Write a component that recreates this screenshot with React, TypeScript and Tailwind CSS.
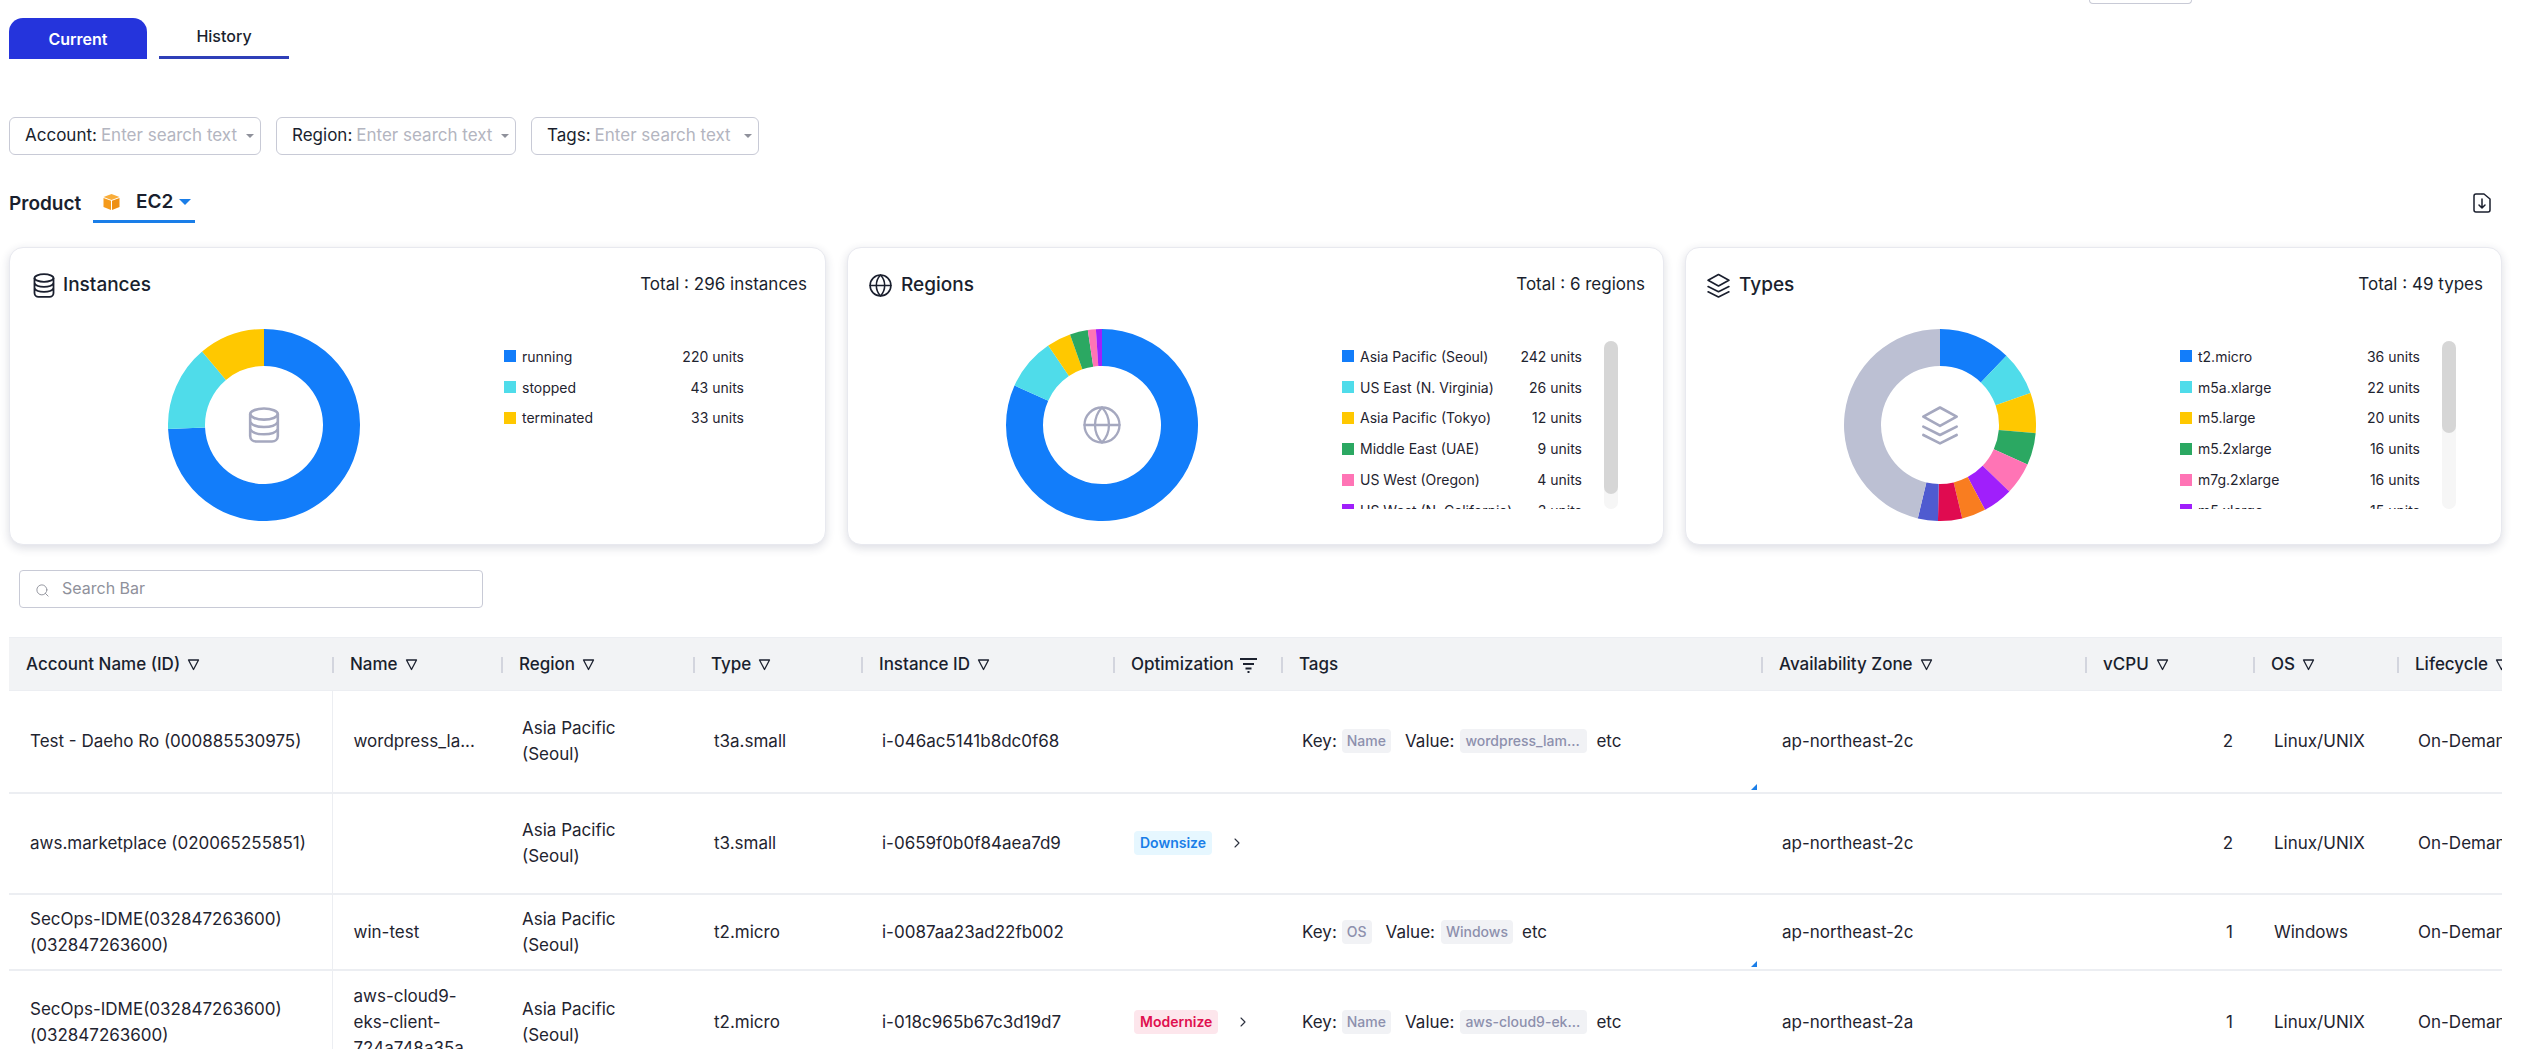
import React from "react";
import { ChevronRight, Globe, Search } from "lucide-react";

type Slice = { label: string; value: number; color: string };

const BLUE = "#127dfa";
const CYAN = "#4fdcea";
const YELLOW = "#ffc800";
const GREEN = "#2ba862";
const PINK = "#ff74b5";
const PURPLE = "#a01ffb";

const instances: Slice[] = [
  { label: "running", value: 220, color: BLUE },
  { label: "stopped", value: 43, color: CYAN },
  { label: "terminated", value: 33, color: YELLOW },
];

const regions: Slice[] = [
  { label: "Asia Pacific (Seoul)", value: 242, color: BLUE },
  { label: "US East (N. Virginia)", value: 26, color: CYAN },
  { label: "Asia Pacific (Tokyo)", value: 12, color: YELLOW },
  { label: "Middle East (UAE)", value: 9, color: GREEN },
  { label: "US West (Oregon)", value: 4, color: PINK },
  { label: "US West (N. California)", value: 3, color: PURPLE },
];

const types: Slice[] = [
  { label: "t2.micro", value: 36, color: BLUE },
  { label: "m5a.xlarge", value: 22, color: CYAN },
  { label: "m5.large", value: 20, color: YELLOW },
  { label: "m5.2xlarge", value: 16, color: GREEN },
  { label: "m7g.2xlarge", value: 16, color: PINK },
  { label: "m5.xlarge", value: 15, color: PURPLE },
];

const typeRest: Slice[] = [
  { label: "c5.large", value: 12, color: "#f97d20" },
  { label: "t3.medium", value: 12, color: "#e00b50" },
  { label: "t3.small", value: 10, color: "#4f5bd0" },
  { label: "etc", value: 137, color: "#bcc0d3" },
];

// donut drawn from the top, clockwise
const Donut = ({ data, children }: { data: Slice[]; children: React.ReactNode }) => {
  const total = data.reduce((sum, d) => sum + d.value, 0);
  const point = (r: number, a: number) =>
    `${96 + r * Math.sin(a)} ${96 - r * Math.cos(a)}`;
  let angle = 0;
  return (
    <div className="relative w-[192px] h-[192px] shrink-0">
      <svg width="192" height="192" viewBox="0 0 192 192">
        {data.map((d) => {
          const start = angle;
          angle += (d.value / total) * Math.PI * 2;
          const big = angle - start > Math.PI ? 1 : 0;
          return (
            <path
              key={d.label}
              fill={d.color}
              d={`M${point(96, start)} A96 96 0 ${big} 1 ${point(96, angle)} L${point(59, angle)} A59 59 0 ${big} 0 ${point(59, start)} Z`}
            />
          );
        })}
      </svg>
      <div className="absolute inset-0 flex items-center justify-center text-[#a5a8bf]">
        {children}
      </div>
    </div>
  );
};

const DbIcon = ({ className }: { className: string }) => (
  <svg className={className} viewBox="0 0 22 25" fill="none" stroke="currentColor" strokeWidth="1.8">
    <ellipse cx="11" cy="5" rx="9.5" ry="3.8" />
    <path d="M1.5 5v15c0 2.4 2 3.8 4 3.8h11c2 0 4-1.4 4-3.8V5" />
    <path d="M1.5 10.5c1.5 2.4 5 3.4 9.5 3.4s8-1 9.5-3.4" />
    <path d="M1.5 15.5c1.5 2.4 5 3.4 9.5 3.4s8-1 9.5-3.4" />
  </svg>
);

const LayersIcon = ({ className }: { className: string }) => (
  <svg className={className} viewBox="0 0 24 24" fill="none" stroke="currentColor" strokeWidth="1.6" strokeLinejoin="round" strokeLinecap="round">
    <path d="M12 1.5 22 7l-10 5.5L2 7z" />
    <path d="M2 13l10 5 10-5" />
    <path d="M2 18l10 5 10-5" />
  </svg>
);

const SortIcon = () => (
  <svg width="13" height="13" viewBox="0 0 13 13" fill="none" stroke="#1d2230" strokeWidth="1.3" strokeLinejoin="round" className="shrink-0">
    <path d="M1.5 2h10L6.5 11.5z" />
  </svg>
);

const Ec2Icon = () => (
  <svg width="17" height="16" viewBox="0 0 17 16">
    <path d="M8.5 0 16.5 3 8.5 6 .5 3z" fill="#f9ad3a" />
    <path d="M.5 4 8 6.8V16L.5 13z" fill="#f59b1c" />
    <path d="M16.5 4 9 6.8V16l7.5-3z" fill="#ee9015" />
  </svg>
);

const Card = ({
  icon,
  title,
  total,
  donut,
  centerIcon,
  legend,
  thumb,
}: {
  icon: React.ReactNode;
  title: string;
  total: string;
  donut: Slice[];
  centerIcon: React.ReactNode;
  legend: Slice[];
  thumb?: string;
}) => (
  <div className="h-[298px] bg-white rounded-[14px] border border-[#e8e9ef] shadow-[0_3px_10px_rgba(40,45,80,0.16)] pt-[24px] pl-[20px] pr-[18px]">
    <div className="flex items-center justify-between h-[26px]">
      <div className="flex items-center gap-[8px] text-[19px] font-medium text-[#1a1f2e]">
        {icon}
        {title}
      </div>
      <div className="text-[17px] text-[#1a1f2e]">{total}</div>
    </div>
    <div className="flex items-start mt-[31px] ml-[138px]">
      <Donut data={donut}>{centerIcon}</Donut>
      <div className="w-[240px] h-[168px] overflow-hidden mt-[12px] ml-[144px]">
        {legend.map((d) => (
          <div key={d.label} className="flex items-center h-[30.8px] text-[14px] text-[#1f2430]">
            <span className="w-[12px] h-[12px] mr-[6px] shrink-0" style={{ background: d.color }} />
            <span className="flex-1 whitespace-nowrap">{d.label}</span>
            <span className="whitespace-nowrap">{d.value} units</span>
          </div>
        ))}
      </div>
      {thumb && (
        <div className="w-[14px] h-[168px] mt-[12px] ml-[22px] rounded-full bg-[#f6f6f6]">
          <div className={`w-[14px] rounded-full bg-[#d6d6d6] ${thumb}`} />
        </div>
      )}
    </div>
  </div>
);

const Head = ({ label, width, first, noSort, filter }: { label: string; width: string; first?: boolean; noSort?: boolean; filter?: boolean }) => (
  <th className={`${width} p-0 font-medium text-left`}>
    <div className={`flex items-center gap-[7px] h-[16px] mt-[1px] whitespace-nowrap ${first ? "pl-[17px]" : "border-l-2 border-[#d3d5de] pl-[16px]"}`}>
      {label}
      {!noSort && !filter && <SortIcon />}
      {filter && (
        <svg width="17" height="16" viewBox="0 0 17 16" fill="none" stroke="#1d2230" strokeWidth="2" className="-ml-[1px]">
          <path d="M0 2h17M3 7h11M5.5 11.500h6M7.500 15h2" />
        </svg>
      )}
    </div>
  </th>
);

const Tag = ({ k, v, wide }: { k: string; v: string; wide?: boolean }) => (
  <div className="flex items-center whitespace-nowrap">
    Key:
    <span className="ml-[5px] h-[24px] px-[5px] flex items-center rounded-[4px] bg-[#f1f2f5] text-[#8d90ad] text-[14px] font-medium">{k}</span>
    <span className="ml-[14px]">Value:</span>
    <span className={`ml-[6px] h-[24px] px-[5px] flex items-center rounded-[4px] bg-[#f1f2f5] text-[#8d90ad] text-[14px] font-medium overflow-hidden ${wide ? "w-[127px]" : ""}`}>{v}</span>
    <span className="ml-[9px]">etc</span>
  </div>
);

const Marker = () => (
  <svg width="6" height="6" viewBox="0 0 6 6" className="absolute right-[4px] bottom-[2px]">
    <path d="M6 0v6H0z" fill="#1a7ee8" />
  </svg>
);

const Badge = ({ label, tone }: { label: string; tone: "blue" | "red" }) => (
  <div className="flex items-center">
    <span
      className={`h-[24px] px-[6px] flex items-center rounded-[4px] text-[14px] font-semibold ${
        tone === "blue" ? "bg-[#e6f7ff] text-[#1a7ee8]" : "bg-[#fde6ec] text-[#e0104f]"
      }`}
    >
      {label}
    </span>
    <ChevronRight className="w-[16px] h-[16px] ml-[17px] text-[#2a2f3d]" strokeWidth={1.6} />
  </div>
);

const rows = [
  {
    h: "h-[102px]",
    account: "Test - Daeho Ro (000885530975)",
    name: "wordpress_la...",
    type: "t3a.small",
    id: "i-046ac5141b8dc0f68",
    opt: null,
    tag: <Tag wide k="Name" v="wordpress_lam..." />,
    mark: true,
    zone: "ap-northeast-2c",
    cpu: 2,
    os: "Linux/UNIX",
  },
  {
    h: "h-[101px]",
    account: "aws.marketplace (020065255851)",
    name: "",
    type: "t3.small",
    id: "i-0659f0b0f84aea7d9",
    opt: <Badge label="Downsize" tone="blue" />,
    tag: null,
    mark: false,
    zone: "ap-northeast-2c",
    cpu: 2,
    os: "Linux/UNIX",
  },
  {
    h: "h-[76px]",
    account: "SecOps-IDME(032847263600) (032847263600)",
    name: "win-test",
    type: "t2.micro",
    id: "i-0087aa23ad22fb002",
    opt: null,
    tag: <Tag k="OS" v="Windows" />,
    mark: true,
    zone: "ap-northeast-2c",
    cpu: 1,
    os: "Windows",
  },
  {
    h: "h-[104px]",
    account: "SecOps-IDME(032847263600) (032847263600)",
    name: "aws-cloud9-eks-client-724a748a35a",
    type: "t2.micro",
    id: "i-018c965b67c3d19d7",
    opt: <Badge label="Modernize" tone="red" />,
    tag: <Tag wide k="Name" v="aws-cloud9-ek..." />,
    mark: false,
    zone: "ap-northeast-2a",
    cpu: 1,
    os: "Linux/UNIX",
  },
];

const Filter = ({ label, width }: { label: string; width: string }) => (
  <div className={`${width} h-[38px] flex items-center pl-[15px] pr-[6px] border border-[#c8cad6] rounded-[6px] text-[17px]`}>
    <span className="text-[#1a1f2e]">{label}</span>
    <span className="ml-[4px] text-[#b3b5c0] whitespace-nowrap">Enter search text</span>
    <span className="ml-auto w-0 h-0 border-x-[4px] border-x-transparent border-t-[4px] border-t-[#8f919b]" />
  </div>
);

export default function App() {
  return (
    <div className="h-screen overflow-hidden bg-white pl-[9px] pr-[26px] font-['Inter',sans-serif] text-[#1a1f2e]">
      {/* Top edge */}
      <div className="h-[18px] flex justify-end">
        <div className="w-[103px] h-[4px] mr-[310px] border border-t-0 border-[#c8cad6] rounded-b-[4px]" />
      </div>

      {/* Tabs */}
      <div className="flex h-[41px] gap-[12px] text-[16px]">
        <div className="w-[138px] flex items-center justify-center rounded-t-[14px] bg-[#2534dc] text-white font-semibold">
          Current
        </div>
        <div className="w-[130px] flex items-center justify-center pb-[2px] border-b-[3px] border-[#2f3fb8] font-medium">
          History
        </div>
      </div>

      {/* Filters */}
      <div className="flex gap-[15px] mt-[58px]">
        <Filter label="Account:" width="w-[252px]" />
        <Filter label="Region:" width="w-[240px]" />
        <Filter label="Tags:" width="w-[228px]" />
      </div>

      {/* Product */}
      <div className="flex items-start justify-between h-[63px] mt-[29px]">
        <div className="flex">
          <div className="w-[84px] h-[38px] pt-[6px] text-[19px] font-semibold">Product</div>
          <div className="w-[102px] h-[39px] flex items-center pl-[10px] border-b-[3px] border-[#1a7ee8]">
            <Ec2Icon />
            <span className="ml-[16px] text-[19px] font-semibold">EC2</span>
            <span className="ml-[6px] w-0 h-0 border-x-[6px] border-x-transparent border-t-[6px] border-t-[#1a7ee8]" />
          </div>
        </div>
        <svg width="18" height="20" viewBox="0 0 18 20" fill="none" stroke="#1a1f2e" strokeWidth="1.5" strokeLinecap="round" strokeLinejoin="round" className="mt-[9px] mr-[11px]">
          <path d="M3 1h8l6 5v11a2 2 0 0 1-2 2H3a2 2 0 0 1-2-2V3a2 2 0 0 1 2-2z" />
          <path d="M9 6v9M6 12l3 3 3-3" />
        </svg>
      </div>

      {/* Summary cards */}
      <div className="grid grid-cols-3 gap-[21px]">
        <Card
          icon={<DbIcon className="w-[22px] h-[25px] ml-[3px]" />}
          title="Instances"
          total="Total : 296 instances"
          donut={instances}
          centerIcon={<DbIcon className="w-[32px] h-[38px]" />}
          legend={instances}
        />
        <Card
          icon={<Globe className="w-[25px] h-[25px]" strokeWidth={1.5} />}
          title="Regions"
          total="Total : 6 regions"
          donut={regions}
          centerIcon={<Globe className="w-[42px] h-[42px]" strokeWidth={1.3} />}
          legend={regions}
          thumb="h-[153px]"
        />
        <Card
          icon={<LayersIcon className="w-[25px] h-[25px]" />}
          title="Types"
          total="Total : 49 types"
          donut={[...types, ...typeRest]}
          centerIcon={<LayersIcon className="w-[40px] h-[40px]" />}
          legend={types}
          thumb="h-[92px]"
        />
      </div>

      {/* Search */}
      <div className="w-[464px] h-[38px] ml-[10px] mt-[25px] flex items-center pl-[15px] border border-[#c8cad6] rounded-[4px] text-[16px] text-[#8f919b]">
        <Search className="w-[15px] h-[15px] mt-[3px]" strokeWidth={1.5} />
        <span className="ml-[12px] pb-[2px]">Search Bar</span>
      </div>

      {/* Table */}
      <div className="mt-[29px] overflow-hidden">
        <table className="table-fixed w-[2580px] border-collapse text-[17px]">
          <thead>
            <tr className="h-[53px] bg-[#f2f3f5] border-y border-[#eceef2]">
              <Head first label="Account Name (ID)" width="w-[323px]" />
              <Head label="Name" width="w-[169px]" />
              <Head label="Region" width="w-[192px]" />
              <Head label="Type" width="w-[168px]" />
              <Head label="Instance ID" width="w-[252px]" />
              <Head filter label="Optimization" width="w-[168px]" />
              <Head noSort label="Tags" width="w-[480px]" />
              <Head label="Availability Zone" width="w-[324px]" />
              <Head label="vCPU" width="w-[168px]" />
              <Head label="OS" width="w-[144px]" />
              <Head label="Lifecycle" width="w-[192px]" />
            </tr>
          </thead>
          <tbody>
            {rows.map((r) => (
              <tr key={r.id} className={`${r.h} border-b-2 border-[#eceef2] text-[#1f2430] leading-[26px]`}>
                <td className="pl-[21px] pr-[20px] border-r border-[#eceef2]">{r.account}</td>
                <td className="px-[21px] break-words">{r.name}</td>
                <td className="pl-[21px] pr-[40px]">Asia Pacific (Seoul)</td>
                <td className="px-[21px]">{r.type}</td>
                <td className="px-[21px]">{r.id}</td>
                <td className="pl-[21px] pr-0">{r.opt}</td>
                <td className="relative px-[21px]">
                  {r.tag}
                  {r.mark && <Marker />}
                </td>
                <td className="px-[21px]">{r.zone}</td>
                <td className="pr-[20px] text-right">{r.cpu}</td>
                <td className="px-[21px]">{r.os}</td>
                <td className="px-[21px] whitespace-nowrap">On-Demand</td>
              </tr>
            ))}
          </tbody>
        </table>
      </div>
    </div>
  );
}
